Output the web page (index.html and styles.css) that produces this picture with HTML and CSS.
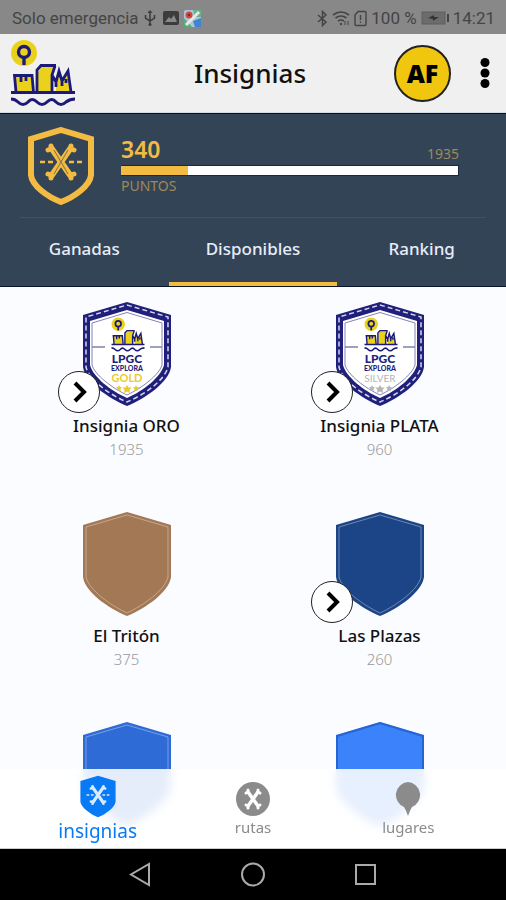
FILE: index.html
```
<!DOCTYPE html>
<html lang="es">
<head>
    <meta charset="UTF-8">
    <meta name="viewport" content="width=device-width, initial-scale=1.0">
    <title>Insignias</title>
    <link rel="stylesheet" href="styles.css">
</head>
<body>

    <!-- Formas compartidas -->
    <svg class="formas" aria-hidden="true">
        <symbol id="huesos" viewBox="0 0 44 40">
            <g fill="none" stroke="currentColor" stroke-linecap="round">
                <path d="M13 7 L31 33 M31 7 L13 33" stroke-width="6"/>
                <path d="M12 4 V7 L9 8 M32 4 V7 L35 8 M12 36 V33 L9 32 M32 36 V33 L35 32" stroke-width="5"/>
                <path d="M1 20 H6 M9 20 H14 M30 20 H35 M38 20 H43" stroke-width="2.5" stroke-linecap="butt"/>
            </g>
        </symbol>
        <symbol id="escudo" viewBox="0 0 90 106">
            <path d="M45 1 L89 14 V66 C87 81 64 97 45 105 C26 97 3 81 1 66 V14 Z" fill="currentColor"/>
        </symbol>
        <symbol id="ciudad" viewBox="0 0 66 68">
            <circle cx="14" cy="14" r="13" fill="#ead21c"/>
            <circle cx="14" cy="13" r="5.5" fill="none" stroke="#1b1a78" stroke-width="3.4"/>
            <path d="M14 19 V26" stroke="#1b1a78" stroke-width="3.4"/>
            <path d="M7 53 L5 36 H22 V53 Z M28 53 V33 L32 27 H44 L41 35 V53 Z M46 53 V42 L49 33 L52 42 L57 33 L60 53 Z" fill="#ead21c"/>
            <path d="M1 53.500 H65 M6 53 L4.500 36.500 H22 L23.500 53 M11 37 V43 M16 37 V42 M27 53 V31 L31 26.500 H46 M45 27 L42 36 V53 M42 36 L46 43 L49 32 L52 42 L58 32 L61 53 M46 41 V48 M52 41 V47 M56 40 V44" fill="none" stroke="#1b1a78" stroke-width="2.800"/>
            <path d="M1 60 Q5 60 8 63 Q13 68 18 63 Q22 58 27 63 Q32 68 37 63 Q42 58 46 63 Q51 68 56 63 Q60 60 65 60" fill="none" stroke="#1b1a78" stroke-width="3"/>
        </symbol>
        <symbol id="escudo-lpgc" viewBox="0 0 90 106">
            <path d="M45 1 L89 14 V66 C87 81 64 97 45 105 C26 97 3 81 1 66 V14 Z" fill="#211f7c"/>
            <path d="M45 4 L86 16 V66 C83 79 62 94 45 101 C28 94 7 79 4 66 V16 Z" fill="none" stroke="#d5d7ec" stroke-width="1.500" stroke-dasharray="5 3"/>
            <path d="M45 9 L82 20 V64 C79 76 61 90 45 97 C29 90 11 76 8 64 V20 Z" fill="#fff"/>
            <path d="M45 11.500 L80 22 V64 C77 74 60 87 45 94 C30 87 13 74 10 64 V22 Z" fill="none" stroke="#8185b4"/>
            <path d="M10 46 H23 M68 46 H80" stroke="#7d83ac" stroke-width="1.500"/>
            <use href="#ciudad" x="28" y="16" width="36" height="35"/>
            <path d="M37 84 l1 2 2 0 -1.500 2 .5 2 -2 -1 -2 1 .5 -2 -1.500 -2 2 0 Z M45 84 l1.500 2.500 3 0 -2 2.500 .5 3 -3 -1.500 -3 1.500 .5 -3 -2 -2.500 3 0 Z M54 84 l1 2 2 0 -1.500 2 .5 2 -2 -1 -2 1 .5 -2 -1.500 -2 2 0 Z" fill="currentColor"/>
        </symbol>
    </svg>

    <!-- Barra de estado -->
    <div class="estado">
        <span>Solo emergencia</span>
        <svg width="12" height="18" viewBox="0 0 12 18" fill="none" stroke="#3c3c3c" stroke-width="1.500"><path d="M6 2 V15 M1.500 6 V9 L6 12 L10.500 9 V6"/><path d="M3.500 4 L6 1 L8.500 4 Z" fill="#3c3c3c" stroke="none"/><circle cx="6" cy="15.500" r="1.500" fill="#3c3c3c" stroke="none"/></svg>
        <svg class="foto" width="16" height="14" viewBox="0 0 16 14"><rect width="16" height="14" rx="2" fill="#3c3c3c"/><path d="M2 11 L6 6 L8 8 L11 4 L14 11 Z" fill="#888"/></svg>
        <svg width="17" height="17" viewBox="0 0 17 17"><rect width="17" height="17" rx="2" fill="#a9c6dc"/><path d="M0 8 L8 17 H0 Z" fill="#5aab75"/><path d="M9 0 H17 V7 H11 Z" fill="#65b282"/><path d="M9 11 L17 8 V17 H11 Z" fill="#4384d0"/><path d="M2 15 L15 2" stroke="#e6e8e8" stroke-width="3"/><circle cx="5" cy="5" r="3.500" fill="#cf4940"/><circle cx="5" cy="5" r="1.200" fill="#7a2622"/></svg>
        <div class="estado-derecha">
            <svg width="11" height="17" viewBox="0 0 11 17" fill="none" stroke="#444" stroke-width="1.500"><path d="M1 5 L9 12 L5.500 15.500 V1.500 L9 5 L1 12"/></svg>
            <svg width="18" height="17" viewBox="0 0 18 17" fill="none" stroke="#444" stroke-width="1.600"><path d="M1 5 Q9 -1 17 5 M3.500 8 Q9 4 14.500 8 M6 11 Q9 9 12 11"/><circle cx="9" cy="14" r="1.200" fill="#444" stroke="none"/><path d="M13 11 V15 M16 15 V11" stroke-width="1"/></svg>
            <svg width="13" height="17" viewBox="0 0 13 17" fill="none" stroke="#444" stroke-width="1.400"><path d="M4 1.500 H11 Q12 1.500 12 2.500 V14 Q12 15.500 11 15.500 H2 Q1 15.500 1 14.500 V5 Z M6.500 5 V10 M6.500 11.500 V13"/></svg>
            <span>100 %</span>
            <svg width="28" height="14" viewBox="0 0 28 14"><rect x="1" y="1" width="23" height="12" fill="#6c6c6c" stroke="#5f5f5f"/><path d="M7 7 L13 4 V6 L18 6 L12 10 V8 Z" fill="#333"/><rect x="26" y="3" width="2" height="8" fill="#444"/></svg>
            <span>14:21</span>
        </div>
    </div>

    <header class="cabecera">
        <a class="logo" href="#" aria-label="LPGC Explora"><svg width="66" height="68"><use href="#ciudad"/></svg></a>
        <h1>Insignias</h1>
        <div class="acciones">
            <button class="avatar">AF</button>
            <button aria-label="Menú"><svg width="10" height="30" viewBox="0 0 10 30"><circle cx="5" cy="4.500" r="4.500"/><circle cx="5" cy="15" r="4.500"/><circle cx="5" cy="25.500" r="4.500"/></svg></button>
        </div>
    </header>

    <!-- Puntos y pestañas -->
    <section class="panel">
        <div class="resumen">
            <svg width="66" height="78" viewBox="0 0 66 78"><path d="M33 3 L63 12 V48 C62 59 46 70 33 75 C20 70 4 59 3 48 V12 Z" fill="none" stroke="#f3bb42" stroke-width="6"/><use href="#huesos" x="11" y="15" width="44" height="40" color="#f3bb42"/><path d="M26 23 L40 47 M40 23 L26 47" stroke="#7d704b" stroke-width="1"/></svg>
            <div class="puntos">
                <div class="cifras">
                    <strong>340</strong>
                    <span>1935</span>
                </div>
                <progress value="20" max="100" aria-label="Puntos"></progress>
                <span class="unidad">PUNTOS</span>
            </div>
        </div>
        <nav class="pestanas">
            <button>Ganadas</button>
            <button class="activa">Disponibles</button>
            <button>Ranking</button>
        </nav>
    </section>

    <div class="contenido">
        <main class="insignias">
            <article class="insignia">
                <div class="escudo oro">
                    <svg width="90" height="106">
                        <use href="#escudo-lpgc"/>
                        <text class="marca" x="45" y="62">LPGC</text>
                        <text class="lema" x="45" y="70">EXPLORA</text>
                        <text class="nivel" x="45" y="81">GOLD</text>
                    </svg>
                    <button class="ver" aria-label="Ver Insignia ORO"><svg width="14" height="22" viewBox="0 0 14 22"><path d="M2 2 L11 11 L2 20"/></svg></button>
                </div>
                <h2>Insignia ORO</h2>
                <p>1935</p>
            </article>
            <article class="insignia">
                <div class="escudo plata">
                    <svg width="90" height="106">
                        <use href="#escudo-lpgc"/>
                        <text class="marca" x="45" y="62">LPGC</text>
                        <text class="lema" x="45" y="70">EXPLORA</text>
                        <text class="nivel" x="45" y="81">SILVER</text>
                    </svg>
                    <button class="ver" aria-label="Ver Insignia PLATA"><svg width="14" height="22" viewBox="0 0 14 22"><path d="M2 2 L11 11 L2 20"/></svg></button>
                </div>
                <h2>Insignia PLATA</h2>
                <p>960</p>
            </article>
            <article class="insignia">
                <div class="escudo marron">
                    <svg width="90" height="106"><use href="#escudo"/><path class="borde" d="M45 4 L86 16 V66 C83 79 62 94 45 102 C28 94 7 79 4 66 V16 Z"/></svg>
                </div>
                <h2>El Tritón</h2>
                <p>375</p>
            </article>
            <article class="insignia">
                <div class="escudo marino">
                    <svg width="90" height="106"><use href="#escudo"/><path class="borde" d="M45 4 L86 16 V66 C83 79 62 94 45 102 C28 94 7 79 4 66 V16 Z"/></svg>
                    <button class="ver" aria-label="Ver Las Plazas"><svg width="14" height="22" viewBox="0 0 14 22"><path d="M2 2 L11 11 L2 20"/></svg></button>
                </div>
                <h2>Las Plazas</h2>
                <p>260</p>
            </article>
            <article class="insignia">
                <div class="escudo azul">
                    <svg width="90" height="106"><use href="#escudo"/><path class="borde" d="M45 4 L86 16 V66 C83 79 62 94 45 102 C28 94 7 79 4 66 V16 Z"/></svg>
                </div>
            </article>
            <article class="insignia">
                <div class="escudo celeste">
                    <svg width="90" height="106"><use href="#escudo"/><path class="borde" d="M45 2 L88 15 V66 C85 80 63 96 45 104 C27 96 5 80 2 66 V15 Z"/></svg>
                </div>
            </article>
        </main>

        <!-- Barra inferior, por encima de la lista -->
        <nav class="barra">
            <a class="activa" href="#insignias">
                <svg width="36" height="43" viewBox="0 0 36 43"><use href="#escudo" width="36" height="43"/><use href="#huesos" x="6" y="9" width="24" height="22" color="#d9eaff"/></svg>
                insignias
            </a>
            <a href="#rutas">
                <svg width="34" height="34" viewBox="0 0 34 34"><circle cx="17" cy="17" r="17" fill="currentColor"/><path d="M12 10 L22 24 M22 10 L12 24" stroke="#fff" stroke-width="3.500"/><path d="M12 8 V10 L10 11 M22 8 V10 L24 11 M12 26 V24 L10 23 M22 26 V24 L24 23" fill="none" stroke="#fff" stroke-width="3" stroke-linecap="round"/></svg>
                rutas
            </a>
            <a href="#lugares">
                <svg width="26" height="34" viewBox="0 0 26 34"><path d="M13 0 A13 13 0 0 1 17 25 Q15 28 13 34 Q11 28 9 25 A13 13 0 0 1 13 0 Z" fill="currentColor"/></svg>
                lugares
            </a>
        </nav>
    </div>

    <!-- Botones del sistema -->
    <div class="sistema">
        <button aria-label="Atrás"><svg width="24" height="26" viewBox="0 0 24 26"><path d="M21 2 V23 L3 12.500 Z"/></svg></button>
        <button aria-label="Inicio"><svg width="24" height="26" viewBox="0 0 24 26"><circle cx="12" cy="12.500" r="11"/></svg></button>
        <button aria-label="Recientes"><svg width="24" height="26" viewBox="0 0 24 26"><rect x="2" y="3" width="19" height="19"/></svg></button>
    </div>

</body>
</html>
```
FILE: styles.css
```
* {
    box-sizing: border-box;
}
body {
    font-family: "Noto Sans", sans-serif;
    height: 100vh;
    margin: 0;
    display: flex;
    flex-direction: column;
    background: #fafcff;
    color: #111;
    overflow: hidden;
}
button {
    font-family: inherit;
    padding: 0;
    border: none;
    background: none;
    cursor: pointer;
}
a {
    text-decoration: none;
}
svg {
    display: block;
}
.formas {
    position: absolute;
    width: 0;
    height: 0;
}

/* Barra de estado */
.estado {
    height: 34px;
    flex: none;
    padding: 2px 11px 0 12px;
    display: flex;
    align-items: center;
    gap: 5px;
    background: #888;
    color: #444;
    font-family: Roboto, sans-serif;
    font-size: 17px;
}
.estado .foto {
    margin-left: 2px;
}
.estado-derecha {
    margin-left: auto;
    display: flex;
    align-items: center;
    gap: 4px;
}

/* Cabecera */
.cabecera {
    height: 79px;
    flex: none;
    padding: 0 16px 0 10px;
    display: grid;
    grid-template-columns: 1fr auto 1fr;
    align-items: center;
    background: #f0f0f0;
    border-bottom: 1px solid #d4dae4;
}
h1 {
    margin: 0;
    font-size: 26px;
    font-weight: 500;
}
.acciones {
    display: flex;
    align-items: center;
    justify-content: flex-end;
    gap: 29px;
}
.avatar {
    width: 57px;
    height: 57px;
    border: 2px solid #222;
    border-radius: 50%;
    background: #f0c60f;
    color: #000;
    font-size: 25px;
    font-weight: 900;
}

/* Panel de puntos */
.panel {
    flex: none;
    background: #344457;
    border-top: 1px solid #071128;
    border-bottom: 1px solid #071128;
}
.resumen {
    height: 104px;
    margin: 0 20px;
    padding: 13px 27px 0 8px;
    display: flex;
    align-items: flex-start;
    gap: 27px;
    border-bottom: 1px solid #435160;
}
.puntos {
    flex: 1;
    padding-top: 7px;
}
.cifras {
    display: flex;
    justify-content: space-between;
    align-items: flex-end;
    height: 30px;
    color: #f3bb42;
}
.cifras strong {
    font-size: 23px;
    font-weight: 600;
    line-height: 30px;
}
.cifras span,
.unidad {
    color: #9c8a58;
    font-size: 14px;
    line-height: 20px;
}
progress {
    display: block;
    width: 100%;
    height: 11px;
    margin-top: 1px;
    appearance: none;
    border: 1px solid #1c2744;
    border-left: none;
    background: #fff;
}
progress::-webkit-progress-bar {
    background: #fff;
}
progress::-webkit-progress-value {
    background: #f3bb42;
}
.unidad {
    display: block;
}
.pestanas {
    display: grid;
    grid-template-columns: repeat(3, 1fr);
    height: 68px;
}
.pestanas button {
    padding-bottom: 3px;
    border-bottom: 4px solid transparent;
    color: #e6edf8;
    font-size: 17px;
    font-weight: 500;
}
.pestanas .activa {
    border-bottom-color: #f3bb42;
}

/* Lista de insignias */
.contenido {
    position: relative;
    flex: 1;
    min-height: 0;
}
.insignias {
    height: 100%;
    padding-top: 14px;
    display: grid;
    grid-template-columns: 1fr 1fr;
    grid-auto-rows: 210px;
    overflow: hidden;
}
.insignia {
    display: flex;
    flex-direction: column;
    align-items: center;
}
.insignia h2 {
    margin: 7px 0 0;
    font-size: 17px;
    font-weight: 500;
    line-height: 24px;
}
.insignia p {
    margin: 0;
    color: #999;
    font-size: 15px;
    font-weight: 300;
    line-height: 22px;
}
.escudo {
    position: relative;
}
.escudo text {
    font-family: Lato, sans-serif;
    text-anchor: middle;
}
.marca {
    font-size: 12px;
    font-weight: 900;
    fill: #211f7c;
}
.lema {
    font-size: 7px;
    font-weight: 900;
    fill: #211f7c;
}
.nivel {
    font-size: 11px;
    font-weight: 700;
    fill: currentColor;
}
.borde {
    fill: none;
    stroke: #fff;
    stroke-opacity: 0.35;
}
.oro {
    color: #ebca31;
}
.plata {
    color: #b5b5b5;
}
.plata .nivel {
    font-size: 10px;
    font-weight: 400;
}
.marron {
    color: #a37854;
}
.marino {
    color: #1c4587;
}
.azul {
    color: #2f6bd6;
}
.celeste {
    color: #3c82fa;
}
.celeste .borde {
    stroke: #1958c0;
    stroke-opacity: 0.7;
    stroke-width: 2;
}
.ver {
    position: absolute;
    left: -24px;
    bottom: -6px;
    width: 42px;
    height: 42px;
    padding-left: 2px;
    display: flex;
    align-items: center;
    justify-content: center;
    border: 1px solid #222;
    border-radius: 50%;
    background: #fff;
}
.ver path {
    fill: none;
    stroke: #000;
    stroke-width: 4;
}

/* Barra inferior */
.barra {
    position: absolute;
    left: 0;
    right: 0;
    bottom: 0;
    height: 80px;
    padding: 0 20px 10px;
    display: grid;
    grid-template-columns: repeat(3, 1fr);
    background: rgba(255, 255, 255, 0.88);
    backdrop-filter: blur(5px);
    border-bottom: 1px solid #ccc;
}
.barra a {
    display: flex;
    flex-direction: column;
    align-items: center;
    justify-content: flex-end;
    color: #8b8b8b;
    font-size: 15px;
    line-height: 22px;
}
.barra .activa {
    margin-bottom: -6px;
    color: #087af5;
    font-size: 19px;
    line-height: 26px;
}

/* Botones del sistema */
.sistema {
    height: 51px;
    flex: none;
    display: flex;
    align-items: center;
    justify-content: center;
    gap: 89px;
    background: #000;
}
.sistema svg {
    fill: none;
    stroke: #aaa;
    stroke-width: 2;
}
```
